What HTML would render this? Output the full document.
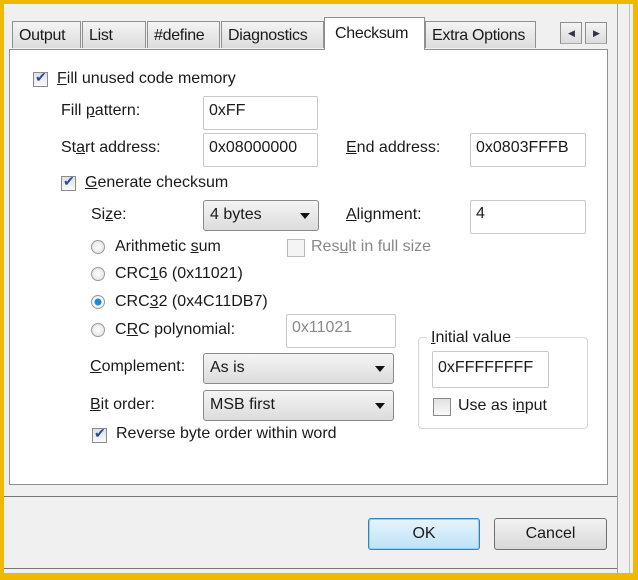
<!DOCTYPE html><html><head><style>
body{margin:0;width:638px;height:580px;overflow:hidden;background:#f0b800;font-family:"Liberation Sans",sans-serif;font-size:16px;color:#1a1a1a}
.a{position:absolute}
#frame{position:absolute;left:4px;top:4px;width:629px;height:569px;background:#f0f0f0}
.tab{position:absolute;top:21px;height:27px;background:linear-gradient(#f4f4f4,#dcdcdc);border:1px solid #8e8f8f;border-bottom:none;line-height:27px;padding-left:6px;box-sizing:border-box;letter-spacing:-0.3px}
.inp{position:absolute;background:#fff;border:1px solid #c8c8c8;border-radius:2px;box-sizing:border-box;padding-left:5px;line-height:28px}
.cb{position:absolute;width:15px;height:15px;border:1px solid #8a8a8a;background:linear-gradient(#e0e0e0,#fafafa);box-sizing:border-box}
.cb.c::after{content:"✔";position:absolute;left:1px;top:-4px;font-size:14px;color:#2a4ca0}
.rb{position:absolute;width:14px;height:14px;border-radius:50%;border:1px solid #999;background:radial-gradient(#fff,#ddd);box-sizing:border-box}
.sel{position:absolute;border:1px solid #8a8a8a;border-radius:3px;background:linear-gradient(#f4f4f4,#dcdcdc);box-sizing:border-box;padding-left:6px;line-height:27px}
.sel::after{content:"";position:absolute;right:8px;top:12px;border:5px solid transparent;border-top:6px solid #111;border-bottom:none}
u{text-decoration:underline}
</style></head><body>
<div id="frame"></div>
<div class="a" style="left:617px;top:4px;width:1px;height:569px;background:#a0a0a0"></div>
<div class="a" style="left:629px;top:4px;width:1px;height:569px;background:#c0c0c0"></div>
<div class="a" style="left:4px;top:496px;width:613px;height:1px;background:#777"></div>
<div class="a" style="left:4px;top:568px;width:613px;height:1px;background:#777"></div>
<div class="a" style="left:9px;top:49px;width:599px;height:436px;background:#fff;border:1px solid #8e8f8f;box-sizing:border-box"></div>
<div class="tab" style="left:12px;width:69px">Output</div>
<div class="tab" style="left:82px;width:64px">List</div>
<div class="tab" style="left:147px;width:73px">#define</div>
<div class="tab" style="left:221px;width:103px">Diagnostics</div>
<div class="tab" style="left:324px;top:17px;height:33px;width:101px;background:#fff;line-height:31px;padding-left:10px">Checksum</div>
<div class="tab" style="left:425px;width:111px">Extra Options</div>
<div class="tab" style="left:560px;width:22px;height:22px;top:22px;border-bottom:1px solid #aaa;font-size:9px;line-height:20px;color:#334;padding-left:7px">◀</div>
<div class="tab" style="left:585px;width:22px;height:22px;top:22px;border-bottom:1px solid #aaa;font-size:9px;line-height:20px;color:#334;padding-left:7px">▶</div>

<div class="cb c" style="left:33px;top:72px"></div><div class="a" style="left:57px;top:70px"><u>F</u>ill unused code memory</div>
<div class="a" style="left:61px;top:102px">Fill <u>p</u>attern:</div>
<div class="inp" style="left:203px;top:96px;width:115px;height:34px">0xFF</div>
<div class="a" style="left:61px;top:139px">St<u>a</u>rt address:</div>
<div class="inp" style="left:203px;top:133px;width:115px;height:34px">0x08000000</div>
<div class="a" style="left:346px;top:139px"><u>E</u>nd address:</div>
<div class="inp" style="left:470px;top:133px;width:116px;height:34px">0x0803FFFB</div>
<div class="cb c" style="left:61px;top:176px"></div><div class="a" style="left:85px;top:174px"><u>G</u>enerate checksum</div>
<div class="a" style="left:91px;top:206px">Si<u>z</u>e:</div>
<div class="sel" style="left:203px;top:200px;width:116px;height:31px">4 bytes</div>
<div class="a" style="left:346px;top:206px"><u>A</u>lignment:</div>
<div class="inp" style="left:470px;top:200px;width:116px;height:34px;line-height:26px">4</div>
<div class="rb" style="left:91px;top:240px"></div><div class="a" style="left:115px;top:238px">Arithmetic <u>s</u>um</div>
<div class="cb" style="left:287px;top:239px;border-color:#bbb;background:#f4f4f4;width:18px;height:18px"></div><div class="a" style="left:311px;top:238px;color:#888">Res<u>u</u>lt in full size</div>
<div class="rb" style="left:91px;top:267px"></div><div class="a" style="left:115px;top:265px">CRC<u>1</u>6 (0x11021)</div>
<div class="rb" style="left:91px;top:295px;background:radial-gradient(#1a8ad8 0 3px,#fff 4px,#ddd)"></div><div class="a" style="left:115px;top:293px">CRC<u>3</u>2 (0x4C11DB7)</div>
<div class="rb" style="left:91px;top:323px"></div><div class="a" style="left:115px;top:321px">C<u>R</u>C polynomial:</div>
<div class="inp" style="left:286px;top:314px;width:110px;height:34px;color:#888;line-height:26px">0x11021</div>
<div class="a" style="left:90px;top:358px"><u>C</u>omplement:</div>
<div class="sel" style="left:203px;top:353px;width:191px;height:31px">As is</div>
<div class="a" style="left:90px;top:396px"><u>B</u>it order:</div>
<div class="sel" style="left:203px;top:390px;width:191px;height:31px">MSB first</div>
<div class="cb c" style="left:92px;top:428px"></div><div class="a" style="left:116px;top:425px">Reverse byte order within word</div>
<div class="a" style="left:418px;top:337px;width:170px;height:92px;border:1px solid #d5d5d5;border-radius:4px;box-sizing:border-box"></div>
<div class="a" style="left:427px;top:329px;background:#fff;padding:0 4px"><u>I</u>nitial value</div>
<div class="inp" style="left:432px;top:351px;width:117px;height:37px;line-height:32px">0xFFFFFFFF</div>
<div class="cb" style="left:433px;top:398px;width:18px;height:18px"></div><div class="a" style="left:458px;top:397px">Use as i<u>n</u>put</div>
<div class="a" style="left:368px;top:518px;width:112px;height:32px;border:1px solid #3c7fb1;border-radius:3px;background:linear-gradient(#e5f4fc,#bfe2f6);box-sizing:border-box;text-align:center;line-height:30px;box-shadow:0 0 0 1px #8fd0f0 inset">OK</div>
<div class="a" style="left:494px;top:518px;width:113px;height:32px;border:1px solid #707070;border-radius:3px;background:linear-gradient(#f2f2f2,#d8d8d8);box-sizing:border-box;text-align:center;line-height:30px">Cancel</div>
</body></html>
